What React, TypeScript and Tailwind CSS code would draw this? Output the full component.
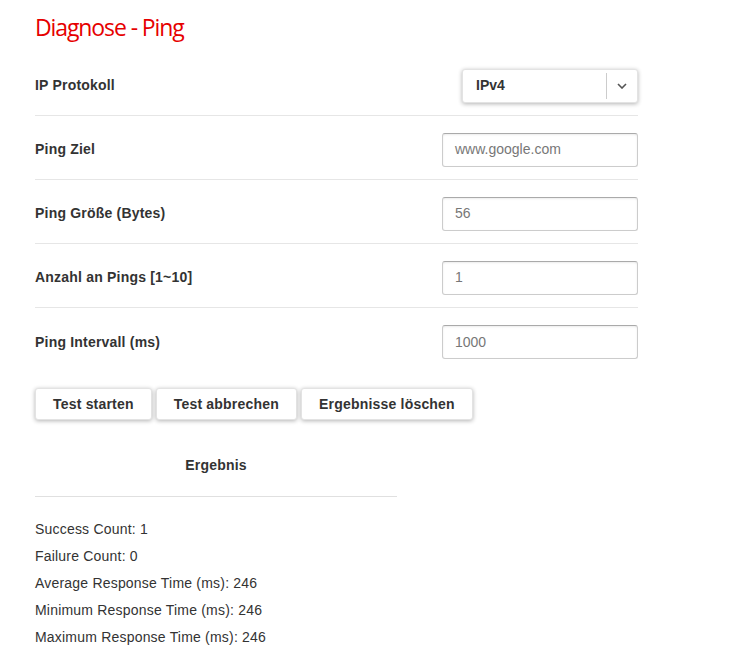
import React from "react";

const rows = [
  { label: "Ping Ziel", value: "www.google.com" },
  { label: "Ping Größe (Bytes)", value: "56" },
  { label: "Anzahl an Pings [1~10]", value: "1" },
  { label: "Ping Intervall (ms)", value: "1000" },
];

const results = [
  "Success Count: 1",
  "Failure Count: 0",
  "Average Response Time (ms): 246",
  "Minimum Response Time (ms): 246",
  "Maximum Response Time (ms): 246",
];

const Row: React.FC<{ label: string; children: React.ReactNode; last?: boolean }> = ({
  label,
  children,
  last,
}) => (
  <div className={`flex items-center justify-between h-[64px] pt-[4px] ${last ? "" : "border-b border-[#e6e6e6]"}`}>
    <span className="text-[14px] font-bold text-[#333] tracking-[0.2px]">{label}</span>
    {children}
  </div>
);

export default function App() {
  return (
    <div className="min-h-[666px] w-[756px] bg-white px-[35px] pt-[12px] text-[#333] font-['Liberation_Sans',Arial,sans-serif]">
      <h1 className="text-[23px] leading-[30px] text-[#e60000] font-['Open_Sans',sans-serif] tracking-[-1.1px]">
        Diagnose - Ping
      </h1>

      <div className="w-[603px] mt-[10px]">
        <Row label="IP Protokoll">
          <div className="flex h-[34px] w-[176px] items-center rounded-[3px] border border-[#e3e3e3] bg-white shadow-[0_1px_4px_rgba(0,0,0,0.3)]">
            <span className="flex-1 pl-[13px] text-[14px] font-bold text-[#333]">IPv4</span>
            <div className="flex h-[26px] w-[31px] items-center justify-center border-l border-[#ccc]">
              <svg width="10" height="6" viewBox="0 0 10 6" fill="none">
                <path d="M1 1l4 4 4-4" stroke="#555" strokeWidth="1.6" />
              </svg>
            </div>
          </div>
        </Row>
        {rows.map((r, i) => (
          <Row key={r.label} label={r.label} last={i === rows.length - 1}>
            <div className="flex h-[34px] w-[196px] items-center rounded-[3px] border border-[#ccc] border-t-[#aaa] px-[12px] text-[14px] text-[#777] shadow-[inset_0_1px_2px_rgba(0,0,0,0.08)]">
              {r.value}
            </div>
          </Row>
        ))}
      </div>

      <div className="mt-[16px] flex gap-[4px]">
        {["Test starten", "Test abbrechen", "Ergebnisse löschen"].map((b) => (
          <button
            key={b}
            className="h-[32px] rounded-[3px] border border-[#e3e3e3] bg-white px-[17px] text-[14px] font-bold tracking-[0.2px] text-[#333] shadow-[0_1px_4px_rgba(0,0,0,0.3)]"
          >
            {b}
          </button>
        ))}
      </div>

      <div className="mt-[35px] w-[362px] border-b border-[#e0e0e0] pb-[20px] text-center text-[14px] font-bold tracking-[0.2px]">
        Ergebnis
      </div>

      <div className="mt-[19px] flex flex-col">
        {results.map((r) => (
          <div key={r} className="h-[27px] leading-[27px] text-[14px] tracking-[0.2px] text-[#333]">
            {r}
          </div>
        ))}
      </div>
    </div>
  );
}
